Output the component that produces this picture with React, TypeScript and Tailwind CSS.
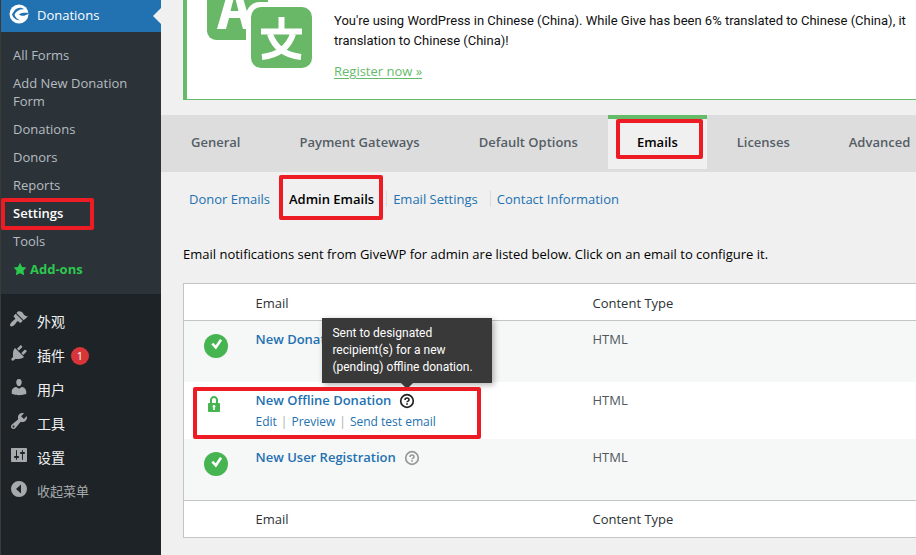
import type { ReactNode } from "react";

const paths = {
  appearance:
    "M14.48 11.06L7.41 3.99l1.5-1.5c.5-.56 2.3-.47 3.51.32 1.21.8 1.43 1.28 2 2.1 1.04 1.53 2.77 2.35 4.57 2.29 0 0-4.01 4.01-4.51 3.86zm-.71.71L6.7 4.7 4.93 6.47c-.39.39-.39 1.02 0 1.41l1.06 1.06c.39.39.39 1.03 0 1.42-.6.6-1.43 1.11-2.21 1.69-.35.26-.7.53-1.01.84C1.43 14.23.4 16.08 1.4 17.07c.99 1 2.84-.03 4.18-1.36.31-.31.58-.66.85-1.02.57-.78 1.08-1.61 1.69-2.21.39-.39 1.02-.39 1.41 0l1.06 1.06c.39.39 1.02.39 1.41 0z",
  plugins:
    "M13.11 4.36L9.87 7.6 8 5.73l3.24-3.24c.35-.34 1.05-.2 1.56.32.52.51.66 1.21.31 1.55zm-8 1.77l.91-1.12 9.01 9.01-1.19.84c-.71.71-2.63 1.16-3.82 1.16H6.14L4.9 17.26c-.59.59-1.54.59-2.12 0-.59-.58-.59-1.53 0-2.12l1.24-1.24v-3.88c0-1.13.4-3.19 1.09-3.89zm7.26 3.97l3.24-3.24c.34-.35 1.04-.21 1.55.31.52.51.66 1.21.31 1.55l-3.24 3.25z",
  users:
    "M10 9.25c-2.27 0-2.73-3.44-2.73-3.44C7 4.02 7.82 2 9.97 2c2.16 0 2.98 2.02 2.71 3.81 0 0-.41 3.44-2.68 3.44zm0 2.57L12.72 10c2.39 0 4.52 2.33 4.52 4.53v2.49s-3.65 1.13-7.24 1.13c-3.65 0-7.24-1.13-7.24-1.13v-2.49c0-2.25 1.94-4.48 4.47-4.48z",
  tools:
    "M16.68 9.77c-1.34 1.34-3.3 1.67-4.95.99l-5.41 6.52c-.99.99-2.59.99-3.58 0s-.99-2.59 0-3.57l6.52-5.42c-.68-1.65-.35-3.61.99-4.95 1.28-1.28 3.12-1.62 4.72-1.06l-2.89 2.89 2.82 2.82 2.86-2.87c.53 1.58.18 3.39-1.08 4.65zM3.81 16.21c.4.39 1.04.39 1.43 0 .4-.4.4-1.04 0-1.43-.39-.4-1.03-.4-1.43 0-.39.39-.39 1.03 0 1.43z",
  settings:
    "M18 16V4c0-.55-.45-1-1-1H3c-.55 0-1 .45-1 1v12c0 .55.45 1 1 1h14c.55 0 1-.45 1-1zM8 11h1c.55 0 1 .45 1 1s-.45 1-1 1H8v1.5c0 .28-.22.5-.5.5s-.5-.22-.5-.5V13H6c-.55 0-1-.45-1-1s.45-1 1-1h1V5.5c0-.28.22-.5.5-.5s.5.22.5.5V11zm5-2h-1c-.55 0-1-.45-1-1s.45-1 1-1h1V5.5c0-.28.22-.5.5-.5s.5.22.5.5V7h1c.55 0 1 .45 1 1s-.45 1-1 1h-1v5.5c0 .28-.22.5-.5.5s-.5-.22-.5-.5V9z",
  collapse: "M10 2a8 8 0 1 0 0 16 8 8 0 0 0 0-16zM12 14.5V5.5L7 10z",
  lock: "M14 9h1c.55 0 1 .45 1 1v7c0 .55-.45 1-1 1H5c-.55 0-1-.45-1-1v-7c0-.55.45-1 1-1h1V6c0-2.21 1.79-4 4-4s4 1.79 4 4v3zm-2 0V6c0-1.1-.9-2-2-2s-2 .9-2 2v3h4zm-1 7l-.36-2.15c.51-.24.86-.75.86-1.35 0-.83-.67-1.5-1.5-1.5s-1.5.67-1.5 1.5c0 .6.35 1.11.86 1.35L9 16h2z",
  star: "M10 1l3 6 6 .75-4.12 4.62L16 19l-6-3-6 3 1.13-6.63L1 7.75 7 7z",
};

function Icon({ name, className }: { name: keyof typeof paths; className: string }) {
  return (
    <svg viewBox="0 0 20 20" className={className} fill="currentColor" fillRule="evenodd" aria-hidden="true">
      <path d={paths[name]} />
    </svg>
  );
}

/* Red annotation frame laid over its parent */
function Mark({ className }: { className: string }) {
  return (
    <span
      aria-hidden="true"
      className={`pointer-events-none absolute z-10 rounded-xs border-4 border-[#ed1c24] ${className}`}
    />
  );
}

const submenu = ["All Forms", "Add New Donation Form", "Donations", "Donors", "Reports", "Settings", "Tools"];

const adminMenu: { label: string; icon: keyof typeof paths; badge?: number }[] = [
  { label: "外观", icon: "appearance" },
  { label: "插件", icon: "plugins", badge: 1 },
  { label: "用户", icon: "users" },
  { label: "工具", icon: "tools" },
  { label: "设置", icon: "settings" },
];

function Sidebar() {
  return (
    <nav className="w-[161px] shrink-0 border-l border-[#3c3a38] bg-[#1d2327] text-[#f0f0f1]">
      <a href="#donations" className="relative flex h-8 items-center bg-[#2271b1] pl-2 text-[13px] text-white">
        <svg viewBox="0 0 20 20" className="mr-2 mb-1 size-5" aria-hidden="true">
          <circle cx="10" cy="10" r="9.5" fill="#fff" />
          <path
            d="M15.500 5.500C12.500 2.700 8 3.400 5.500 6.500L3 10.300c1 4 4.500 6.200 8 5.900-2.800-.8-4.800-2.700-5.500-5.600 2-3.600 5.500-5.800 10-5.100z"
            fill="#2271b1"
          />
          <path d="M19.300 9c-3.300-.5-6.300-.2-9.300 1.200 1.300 1.400 3.300 1.900 5.200 1.500 1.700-.4 3-1.100 4.200-1.600z" fill="#2271b1" />
        </svg>
        Donations
        <span className="absolute top-2 right-0 border-y-8 border-r-8 border-y-transparent border-r-[#f0f0f0]" />
      </a>
      <ul className="bg-[#2c3338] pt-[9px] pb-[11px] text-[13px] leading-[18px]">
        {submenu.map((label) => (
          <li key={label} className="relative">
            <a
              href="#submenu"
              className={`block py-[5px] pr-6 pl-3 ${label === "Settings" ? "font-semibold text-white" : "text-[#b5bcc2]"}`}
            >
              {label}
            </a>
            {label === "Settings" && <Mark className="-top-px left-0 h-8 w-[93px]" />}
          </li>
        ))}
        <li>
          <a href="#addons" className="flex items-center gap-[3px] py-[5px] pl-3 font-bold text-[#2cc74f]">
            <Icon name="star" className="size-[14px]" />
            Add-ons
          </a>
        </li>
      </ul>
      <ul className="pt-[11px] text-sm">
        {adminMenu.map((item) => (
          <li key={item.label}>
            <a href="#menu" className="flex h-[34px] items-center pl-2">
              <Icon name={item.icon} className="mr-2 mb-[6px] size-5 text-[#a7aaad]" />
              {item.label}
              {item.badge && (
                <span className="ml-[6px] flex size-[18px] items-center justify-center rounded-full bg-[#d63638] text-[11px] text-white">
                  {item.badge}
                </span>
              )}
            </a>
          </li>
        ))}
        <li>
          <button type="button" className="flex h-8 items-center pl-2 text-[13px] text-[#a7aaad]">
            <Icon name="collapse" className="mr-2 mb-1 size-5" />
            收起菜单
          </button>
        </li>
      </ul>
    </nav>
  );
}

function Banner() {
  return (
    <section className="ml-[22px] flex h-[100px] overflow-hidden border-b border-l-4 border-[#66bb6a] bg-white">
      <svg viewBox="0 0 147 99" className="h-[99px] w-[147px] shrink-0" aria-hidden="true">
        <rect x="20" y="-22" width="61" height="62" rx="9" fill="#69b868" />
        <path d="M30 29 43 -16h9L65 29H56L53 18H42L39 29zM43.500 11h8L47.500-5z" fill="#fff" fillRule="evenodd" />
        <rect x="59" y="2" width="72" height="70" rx="14" fill="#fff" />
        <rect x="64" y="7" width="61" height="61" rx="10" fill="#69b868" />
        <g fill="none" stroke="#fff" strokeWidth="6">
          <path d="M94.500 17v13M74 31.500h41" />
          <path d="M83 34c4 12 14 21 31 23M106 34c-4 12-14 21-31 23" />
        </g>
      </svg>
      <div className="min-w-0 flex-1 pt-[11px] font-['Roboto','Open_Sans',sans-serif] text-[13px] leading-5 text-[#111]">
        <p className="whitespace-nowrap">
          You're using WordPress in Chinese (China). While Give has been 6% translated to Chinese (China), it
          <br />
          translation to Chinese (China)!
        </p>
        <a
          href="#register"
          className="mt-[10px] inline-block font-['Open_Sans',sans-serif] text-[#66bb6a] underline underline-offset-2"
        >
          Register now »
        </a>
      </div>
    </section>
  );
}

const tabs = ["General", "Payment Gateways", "Default Options", "Emails", "Licenses", "Advanced"];

function Tabs() {
  return (
    <nav className="mt-[15px] flex h-[57px] overflow-hidden bg-[#dddddd] pl-px text-[13px] font-semibold text-[#555d66]">
      {tabs.map((tab) =>
        tab === "Emails" ? (
          <a
            key={tab}
            href="#emails"
            aria-current="page"
            className="relative mr-px flex h-[54px] shrink-0 items-center border-t-4 border-[#66bb6a] bg-[#f0f0f0] px-[29px] pb-[2px] text-black"
          >
            {tab}
            <Mark className="top-0 right-1 left-2 h-10" />
          </a>
        ) : (
          <a key={tab} href="#tab" className="mr-px flex h-[54px] shrink-0 items-center px-[29px] pt-[2px]">
            {tab}
          </a>
        ),
      )}
    </nav>
  );
}

const sections = ["Donor Emails", "Admin Emails", "Email Settings", "Contact Information"];

function Sections() {
  return (
    <ul className="mt-[18px] ml-[22px] flex text-[13px] leading-[18px] text-[#2271b1]">
      {sections.map((s, i) => (
        <li key={s} className="relative mr-px flex items-center">
          {i > 0 && <span className="ml-[5px] h-4 w-px bg-[#dcdcde]" />}
          <a href="#section" className={`px-[6px] ${s === "Admin Emails" ? "font-semibold text-black" : ""}`}>
            {s}
          </a>
          {s === "Admin Emails" && <Mark className="-top-[15px] -right-[3px] left-[2px] h-[45px]" />}
        </li>
      ))}
    </ul>
  );
}

function Help({ dark, children }: { dark?: boolean; children?: ReactNode }) {
  return (
    <button
      type="button"
      aria-label="Help"
      className={`relative ml-2 inline-block size-4 align-middle ${dark ? "text-[#222]" : "text-[#999]"}`}
    >
      <svg viewBox="0 0 16 16" className="size-4" fill="none" stroke="currentColor" aria-hidden="true">
        <circle cx="8" cy="8" r="6.300" strokeWidth="1.700" />
        <path d="M6 6.900c0-2.500 4-2.500 4 0 0 1.200-2 1.200-2 2.400" strokeWidth="1.600" />
        <path d="M8 10.200v1.500" strokeWidth="1.700" />
      </svg>
      {children}
    </button>
  );
}

function Tooltip() {
  return (
    <span
      role="tooltip"
      className="absolute bottom-full left-1/2 mb-[10px] block w-[170px] -translate-x-1/2 bg-[#393939] px-[10px] py-[7px] text-left font-['Roboto',sans-serif] text-xs leading-[17px] font-normal text-white shadow-[2px_2px_6px_rgba(0,0,0,0.3)]"
    >
      Sent to designated recipient(s) for a new (pending) offline donation.
      <span className="absolute top-full left-1/2 -translate-x-1/2 border-x-[6px] border-t-[6px] border-x-transparent border-t-[#393939]" />
    </span>
  );
}

function Enabled() {
  return (
    <span className="ml-5 flex size-6 items-center justify-center rounded-full bg-[#46b450]">
      <svg viewBox="0 0 24 24" className="size-6" aria-label="Enabled">
        <path d="M8.300 9.700l3.500 3.700 5.200-7.600" fill="none" stroke="#fff" strokeWidth="2.600" />
      </svg>
    </span>
  );
}

function EmailsTable() {
  return (
    <table className="mt-5 ml-[22px] w-[880px] table-fixed border border-[#c3c4c7] bg-white text-left text-[13px] leading-[18px] text-[#50575e]">
      <colgroup>
        <col className="w-[72px]" />
        <col className="w-[337px]" />
        <col />
      </colgroup>
      <thead className="text-[#2c3338]">
        <tr className="h-[37px] border-b border-[#c3c4c7]">
          <td />
          <th className="pt-[2px] font-normal">Email</th>
          <th className="pt-[2px] font-normal">Content Type</th>
        </tr>
      </thead>
      <tbody className="align-top">
        <tr className="h-[61px] bg-[#f6f7f7]">
          <td className="pt-[13px]">
            <Enabled />
          </td>
          <td className="pt-[9px] font-semibold text-[#2271b1]">
            <a href="#new-donation">New Donation</a>
          </td>
          <td className="pt-[9px]">HTML</td>
        </tr>
        <tr className="h-[57px]">
          <td className="relative pt-3">
            <Icon name="lock" className="ml-5 size-5 text-[#46b450]" />
            <Mark className="top-[5px] left-[9px] h-[52px] w-[288px]" />
          </td>
          <td className="pt-[9px] text-[#2271b1]">
            <div className="font-semibold">
              <a href="#offline">New Offline Donation</a>
              <Help dark>
                <Tooltip />
              </Help>
            </div>
            <div className="mt-1 flex gap-1 text-xs leading-[18px]">
              <a href="#edit">Edit</a>
              <span className="text-[#aaa]">|</span>
              <a href="#preview">Preview</a>
              <span className="text-[#aaa]">|</span>
              <a href="#test">Send test email</a>
            </div>
          </td>
          <td className="pt-[9px]">HTML</td>
        </tr>
        <tr className="h-[62px] bg-[#f6f7f7]">
          <td className="pt-[13px]">
            <Enabled />
          </td>
          <td className="pt-[9px] font-semibold text-[#2271b1]">
            <a href="#registration">New User Registration</a>
            <Help />
          </td>
          <td className="pt-[9px]">HTML</td>
        </tr>
      </tbody>
      <tfoot className="text-[#2c3338]">
        <tr className="h-[37px] border-t border-[#c3c4c7]">
          <td />
          <td>Email</td>
          <td>Content Type</td>
        </tr>
      </tfoot>
    </table>
  );
}

export default function App() {
  return (
    <div className="flex min-h-screen overflow-hidden bg-[#f0f0f0] font-['Open_Sans','Noto_Sans_CJK_SC',sans-serif]">
      <Sidebar />
      <main className="min-w-0 flex-1 overflow-hidden">
        <Banner />
        <Tabs />
        <Sections />
        <p className="mt-[37px] ml-[22px] text-[13px] leading-[18px] text-black">
          Email notifications sent from GiveWP for admin are listed below. Click on an email to configure it.
        </p>
        <EmailsTable />
      </main>
    </div>
  );
}
